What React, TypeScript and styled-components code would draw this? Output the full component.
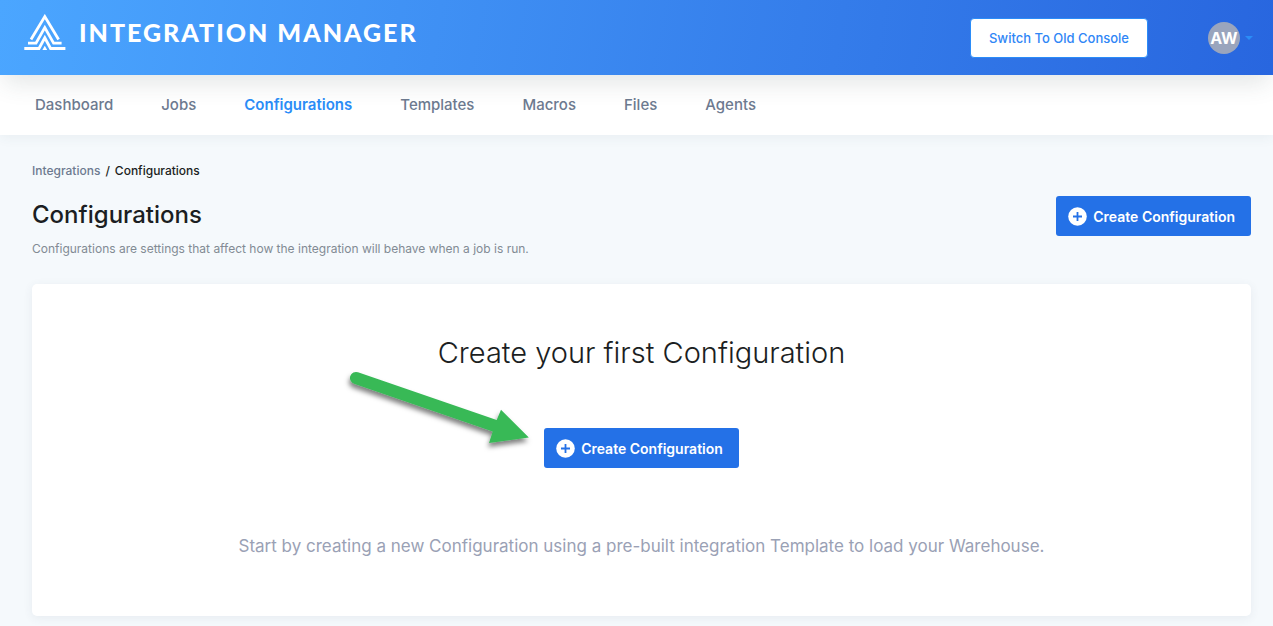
import React from "react";
import styled, { createGlobalStyle } from "styled-components";

const GlobalStyle = createGlobalStyle`
  * { box-sizing: border-box; }
  body {
    margin: 0;
    background: #f5f9fc;
    color: #1b1e22;
    font-family: Inter, Roboto, sans-serif;
  }
  h1, h2, p { margin: 0; }
  a { text-decoration: none; }
  button { font-family: inherit; cursor: pointer; }
`;

const Header = styled.header`
  position: relative;
  z-index: 1;
  display: flex;
  align-items: center;
  justify-content: space-between;
  height: 75px;
  padding: 0 20px 0 24px;
  background: linear-gradient(100deg, #4ba6ff 0%, #2866df 100%);
  box-shadow: 0 12px 24px -4px rgba(60, 76, 76, 0.14);
`;

const Brand = styled.a`
  display: flex;
  align-items: center;
  gap: 13px;
  padding-bottom: 12px;
  color: #fff;
`;

const BrandName = styled.span`
  font-family: Lato, sans-serif;
  font-size: 25px;
  font-weight: 900;
  line-height: 32px;
  letter-spacing: 2px;
  white-space: nowrap;
`;

const HeaderActions = styled.div`
  display: flex;
  align-items: center;
  gap: 60px;
`;

const SwitchButton = styled.button`
  height: 40px;
  padding: 0 18px;
  border: 1px solid #2b8cf8;
  border-radius: 4px;
  background: #fff;
  color: #2f86f6;
  font-size: 13px;
  font-weight: 500;
`;

const UserButton = styled.button`
  display: flex;
  align-items: center;
  gap: 5px;
  padding: 0;
  border: 0;
  background: none;
`;

const Avatar = styled.span`
  width: 32px;
  border-radius: 50%;
  background: #9aa5bd;
  color: #fff;
  font-size: 16px;
  font-weight: 700;
  line-height: 32px;
  text-align: center;
`;

const Nav = styled.nav`
  display: flex;
  align-items: center;
  gap: 48px;
  height: 60px;
  padding: 0 35px;
  background: #fff;
  box-shadow: 0 2px 12px rgba(60, 80, 100, 0.07);
`;

const NavLink = styled.a<{ $active?: boolean }>`
  color: ${(p) => (p.$active ? "#2b8df7" : "#6d7a90")};
  font-size: 15px;
  font-weight: ${(p) => (p.$active ? 600 : 500)};
  line-height: 20px;
`;

const Main = styled.main`
  padding: 28px 22px 10px 32px;
`;

const Breadcrumb = styled.nav`
  display: flex;
  gap: 5px;
  font-size: 12px;
  font-weight: 500;
  line-height: 16px;
`;

const CrumbLink = styled.a`
  color: #6d7a90;
`;

const PageHead = styled.div`
  display: flex;
  align-items: flex-start;
  justify-content: space-between;
  padding: 17px 0 26px;
`;

const PageTitle = styled.h1`
  padding-top: 3px;
  font-size: 24px;
  font-weight: 500;
  line-height: 32px;
`;

const PageNote = styled.p`
  padding-top: 9px;
  color: #828b94;
  font-size: 12px;
  font-weight: 400;
  line-height: 18px;
`;

const PrimaryButton = styled.button`
  display: flex;
  align-items: center;
  gap: 6px;
  height: 40px;
  padding: 0 16px 0 12px;
  border: 0;
  border-radius: 3px;
  background: #2471e7;
  color: #fff;
  font-size: 14px;
  font-weight: 600;
  white-space: nowrap;
`;

const Card = styled.section`
  display: flex;
  flex-direction: column;
  align-items: center;
  padding: 49px 24px 56px;
  border-radius: 5px;
  background: #fff;
  box-shadow: 0 2px 10px rgba(60, 80, 100, 0.08);
`;

const CardTitle = styled.h2`
  font-size: 29px;
  font-weight: 300;
  line-height: 40px;
`;

const CardAction = styled.div`
  position: relative;
  margin: 55px 0 64px;
`;

const Arrow = styled.svg`
  position: absolute;
  top: -68px;
  right: 100%;
  pointer-events: none;
`;

const CardNote = styled.p`
  color: #9aa1b5;
  font-size: 17px;
  font-weight: 400;
  line-height: 28px;
`;

const Logo = () => (
  <svg width="42" height="36" viewBox="0 0 42 36" fill="none" stroke="#fff" strokeWidth="2.8" aria-hidden="true">
    <path d="M7 25.5 L20.8 2.6 L34.6 25.5" />
    <path d="M4 29.2 H12 L20.8 13.6 L29.6 29.2 H37.6" />
    <path d="M0.3 34.5 H15 L20.8 23.8 L26.6 34.5 H41.4" />
    <path d="M20.8 31.8 L23.2 36 H18.4 Z" fill="#fff" stroke="none" />
  </svg>
);

const PlusCircle = () => (
  <svg width="19" height="19" viewBox="0 0 19 19" aria-hidden="true">
    <circle cx="9.5" cy="9.5" r="9.3" fill="#fff" />
    <path d="M9.5 5v9M5 9.5h9" stroke="#2471e7" strokeWidth="1.8" />
  </svg>
);

const CreateButton = () => (
  <PrimaryButton type="button">
    <PlusCircle />
    Create Configuration
  </PrimaryButton>
);

const links = ["Dashboard", "Jobs", "Configurations", "Templates", "Macros", "Files", "Agents"];

export default function App() {
  return (
    <>
      <GlobalStyle />
      <Header>
        <Brand href="#">
          <Logo />
          <BrandName>INTEGRATION MANAGER</BrandName>
        </Brand>
        <HeaderActions>
          <SwitchButton type="button">Switch To Old Console</SwitchButton>
          <UserButton type="button" aria-label="Account menu">
            <Avatar>AW</Avatar>
            <svg width="8" height="4" viewBox="0 0 8 4" aria-hidden="true">
              <path d="M0 0h8L4 4z" fill="#2b8df7" />
            </svg>
          </UserButton>
        </HeaderActions>
      </Header>
      <Nav aria-label="Main">
        {links.map((name) => (
          <NavLink key={name} href="#" $active={name === "Configurations"}>
            {name}
          </NavLink>
        ))}
      </Nav>
      <Main>
        <Breadcrumb aria-label="Breadcrumb">
          <CrumbLink href="#">Integrations</CrumbLink>
          <span>/</span>
          <span>Configurations</span>
        </Breadcrumb>
        <PageHead>
          <div>
            <PageTitle>Configurations</PageTitle>
            <PageNote>
              Configurations are settings that affect how the integration will behave when a job is run.
            </PageNote>
          </div>
          <CreateButton />
        </PageHead>
        <Card>
          <CardTitle>Create your first Configuration</CardTitle>
          <CardAction>
            <Arrow width="204" height="100" viewBox="340 360 204 100" aria-hidden="true">
              <defs>
                <filter id="arrow-shadow" x="-10%" y="-20%" width="120%" height="150%">
                  <feDropShadow dx="-1" dy="4" stdDeviation="2.5" floodColor="#000" floodOpacity="0.5" />
                </filter>
              </defs>
              <path
                d="M358 372.3 L496.7 420 L501 409.7 L528.8 437.6 L489 443 L492.7 431.5 L354 383.7 A6 6 0 0 1 358 372.3 Z"
                fill="#37b957"
                filter="url(#arrow-shadow)"
              />
            </Arrow>
            <CreateButton />
          </CardAction>
          <CardNote>
            Start by creating a new Configuration using a pre-built integration Template to load your Warehouse.
          </CardNote>
        </Card>
      </Main>
    </>
  );
}
